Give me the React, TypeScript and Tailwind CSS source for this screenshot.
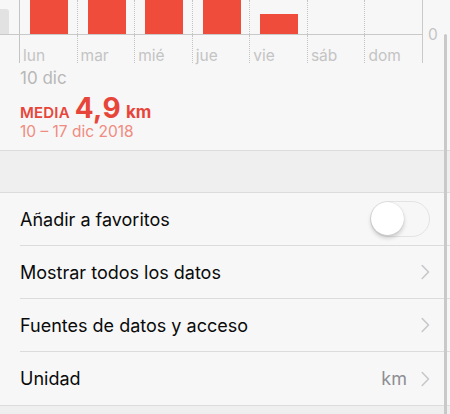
import React from "react";

const days = ["lun", "mar", "mié", "jue", "vie", "sáb", "dom"];
const bars = [40, 40, 40, 40, 20, 0, 0];

function Chevron() {
  return (
    <svg width="9" height="16" viewBox="0 0 9 16" className="shrink-0">
      <path d="M1.2 1.5 L7.5 8 L1.2 14.5" fill="none" stroke="#c7c7cc" strokeWidth="1.6" strokeLinecap="round" strokeLinejoin="round" />
    </svg>
  );
}

function Row({ label, right, last }: { label: string; right?: React.ReactNode; last?: boolean }) {
  return (
    <div className="pl-[20px]">
      <div className={`h-[53px] flex items-center justify-between pr-[20px] ${last ? "" : "border-b border-[#dcdcdc]"}`}>
        <span className="text-[18px] text-[#0a0a0a]">{label}</span>
        {right}
      </div>
    </div>
  );
}

export default function App() {
  return (
    <div className="relative w-[450px] h-[414px] overflow-hidden bg-[#f7f7f7]" style={{ fontFamily: "Inter, 'Noto Sans', sans-serif" }}>
      {/* Chart */}
      <div className="flex">
        <div className="w-[423px]">
          <div className="flex h-[35px] border-b border-[#c9c9c9]">
            <div className="w-[19px] flex items-end">
              <div className="w-[9px] h-[25px] bg-[#e2e2e2] rounded-tr-[3px]" />
            </div>
            {bars.map((h, i) => (
              <div key={i} className={`flex-1 flex items-end border-l border-[#c4c4c4] ${i === 0 ? "border-solid" : "border-dotted"}`}>
                {h > 0 && (
                  <div className="ml-[10px] w-[38px] bg-[#f04c3b]" style={{ height: h }} />
                )}
              </div>
            ))}
            <div className="w-px bg-[#c9c9c9]" />
          </div>
          <div className="flex h-[28px]">
            <div className="w-[19px]" />
            {days.map((d, i) => (
              <div key={d} className={`flex-1 border-l border-[#c4c4c4] ${i === 0 ? "border-solid" : "border-dotted"} pl-[3px] pt-[12px] text-[15.5px] leading-[18px] text-[#c4c4c4]`}>
                {d}
              </div>
            ))}
            <div className="w-px bg-[#c9c9c9]" />
          </div>
        </div>
        <div className="pl-[5px] pt-[26px] text-[15.5px] leading-[18px] text-[#c4c4c4]">0</div>
      </div>
      <div className="pl-[20px] text-[17px] leading-[18px] text-[#b8b8b8] mt-[6px]">10 dic</div>
      <div className="pl-[20px] mt-[9px] h-[26px] flex items-baseline">
        <span className="text-[15px] leading-[20px] font-semibold text-[#e8453a] tracking-[0.2px]">MEDIA</span>
        <span className="ml-[5px] text-[28px] leading-[24px] font-bold tracking-[0.3px] text-[#e8453a]">4,9</span>
        <span className="ml-[5px] text-[17px] leading-[20px] font-bold text-[#e8453a]">km</span>
      </div>
      <div className="pl-[20px] mt-[1px] text-[15.5px] leading-[18px] text-[#ef8b80]">10 – 17 dic 2018</div>

      {/* band */}
      <div className="mt-[9px] h-[43px] border-t border-b border-[#dcdcdc] bg-[#efefef]" />

      <Row
        label="Añadir a favoritos"
        right={
          <div className="relative w-[60px] h-[36px] rounded-full border-[1.5px] border-[#e3e3e3] bg-[#f7f7f7]">
            <div className="absolute left-0 top-0 w-[33px] h-[33px] rounded-full bg-white shadow-[0_3px_4px_rgba(0,0,0,0.18),0_0_1px_rgba(0,0,0,0.2)]" />
          </div>
        }
      />
      <Row label="Mostrar todos los datos" right={<Chevron />} />
      <Row label="Fuentes de datos y acceso" right={<Chevron />} />
      <Row
        label="Unidad"
        last
        right={
          <div className="flex items-center gap-[14px]">
            <span className="text-[18px] text-[#8e8e93]">km</span>
            <Chevron />
          </div>
        }
      />
      <div className="h-[20px] border-t border-[#dcdcdc] bg-[#efefef]" />

      {/* scroll indicator */}
      <div className="absolute left-[444px] top-[34px] w-[3px] h-[400px] rounded-full bg-[#c9c9c9]" />
    </div>
  );
}
